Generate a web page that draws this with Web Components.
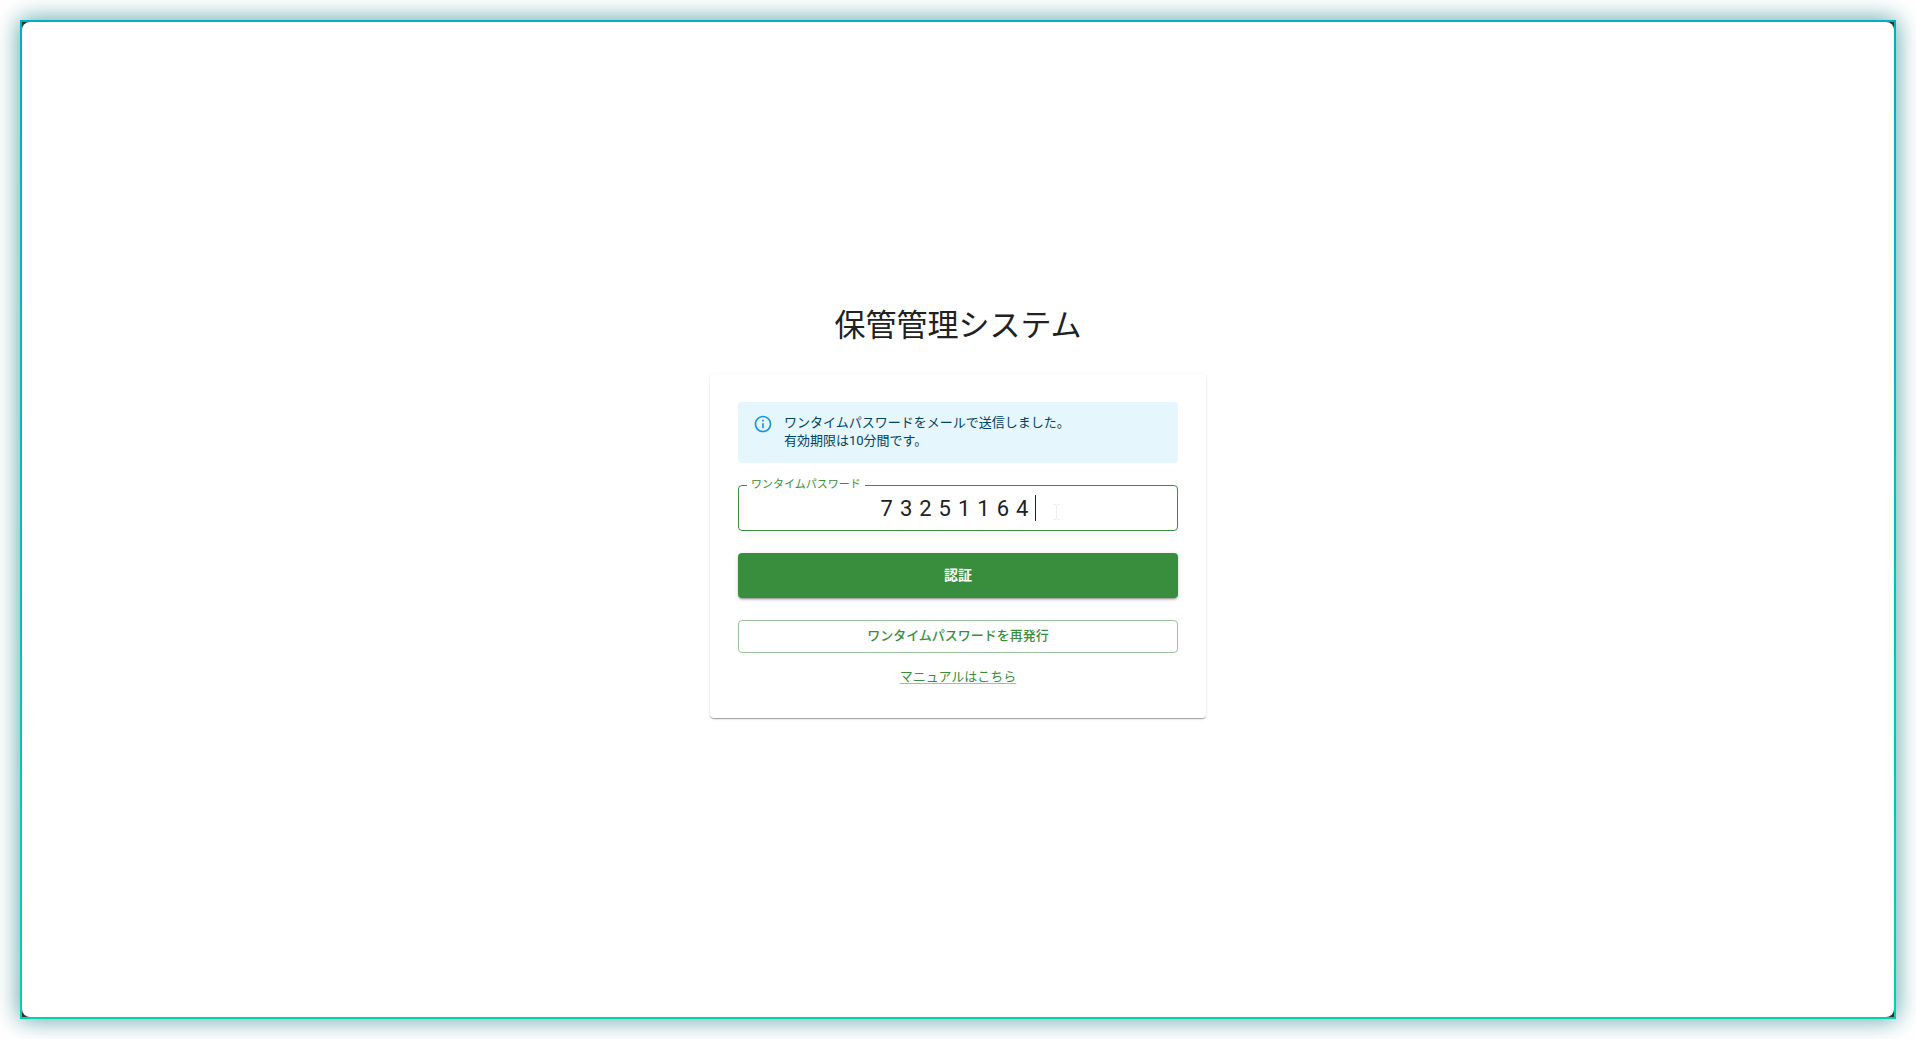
<!DOCTYPE html>
<html lang="ja">
<head>
<meta charset="utf-8">
<title>保管管理システム</title>
<style>
html, body { height: 100%; margin: 0; }
body {
  background: #fff;
  color: #212121;
  font-family: Roboto, "Noto Sans CJK JP", sans-serif;
}
</style>
</head>
<body>
<app-frame>
  <login-panel heading="保管管理システム">
    <info-alert>ワンタイムパスワードをメールで送信しました。<br>有効期限は10分間です。</info-alert>
    <otp-field label="ワンタイムパスワード" value="73251164"></otp-field>
    <action-button variant="contained">認証</action-button>
    <action-button variant="outlined">ワンタイムパスワードを再発行</action-button>
    <text-link href="#manual">マニュアルはこちら</text-link>
  </login-panel>
</app-frame>
<script>
const define = (name, render) => customElements.define(name, class extends HTMLElement {
  constructor() {
    super();
    this.attachShadow({ mode: "open" });
  }
  connectedCallback() {
    this.shadowRoot.innerHTML = "<style>*{box-sizing:border-box}</style>" + render(this);
  }
});

define("app-frame", () => `
<style>
:host { display: flex; box-sizing: border-box; min-height: 100vh; padding: 20px; overflow: hidden; }
.edge {
  flex: 1; display: flex; padding: 2px;
  background: linear-gradient(#333, #333) content-box, linear-gradient(#00afc0, #00d0ae);
  box-shadow: 0 0 22px rgba(0, 130, 140, .6), 0 0 24px rgba(40, 50, 50, .14);
}
main {
  flex: 1; display: flex; align-items: center; justify-content: center;
  background: #fff; border-radius: 8px;
}
</style>
<div class="edge"><main><slot></slot></main></div>`);

define("login-panel", el => `
<style>
:host { display: block; box-sizing: border-box; width: 496px; max-width: 100%; padding-bottom: 14px; }
h1 { margin: 0 0 29px; font-size: 31px; line-height: 38px; font-weight: 400; text-align: center; }
section {
  display: flex; flex-direction: column; gap: 22px; padding: 28px;
  background: #fff; border-radius: 4px;
  box-shadow: 0 2px 1px -1px rgba(0,0,0,.2), 0 1px 1px rgba(0,0,0,.14), 0 1px 3px rgba(0,0,0,.12);
}
</style>
<h1>${el.getAttribute("heading")}</h1>
<section><slot></slot></section>`);

define("info-alert", () => `
<style>
:host {
  display: flex; gap: 11px; padding: 12px 15px 13px; border-radius: 4px;
  background: #e5f6fd; color: #014361; font-size: 13px; line-height: 18px;
}
svg { flex: none; width: 20px; height: 20px; fill: #1c94d6; }
</style>
<svg viewBox="0 0 24 24" aria-hidden="true"><path d="M11 7h2v2h-2zm0 4h2v6h-2zm1-9C6.48 2 2 6.48 2 12s4.48 10 10 10 10-4.48 10-10S17.52 2 12 2zm0 18c-4.41 0-8-3.59-8-8s3.59-8 8-8 8 3.59 8 8-3.59 8-8 8z"/></svg>
<div role="status"><slot></slot></div>`);

define("otp-field", el => `
<style>
:host { display: block; position: relative; }
input {
  display: block; width: 100%; height: 46px; margin: 0; padding: 0;
  border: 1px solid #388e3c; border-radius: 4px; outline: none; background: #fff;
  color: #212121; font: 22px Roboto, "Noto Sans CJK JP", sans-serif;
  letter-spacing: 7px; text-align: center; caret-color: transparent;
}
label {
  position: absolute; top: -9px; left: 9px; padding: 0 4px;
  background: #fff; color: #388e3c; font-size: 11px; line-height: 18px;
}
.caret { position: absolute; top: 10px; left: calc(50% + 77px); width: 1px; height: 26px; background: #212121; }
svg { position: absolute; top: 19px; left: calc(50% + 95px); width: 7px; height: 16px; stroke: #efefef; fill: none; }
</style>
<input id="otp" inputmode="numeric" autocomplete="one-time-code" value="${el.getAttribute("value")}">
<label for="otp">${el.getAttribute("label")}</label>
<span class="caret"></span>
<svg viewBox="0 0 7 16" aria-hidden="true"><path d="M0 .5h3M4 .5h3M3.5 1v14M0 15.5h3M4 15.5h3"/></svg>`);

define("action-button", () => `
<style>
:host { display: block; }
button {
  display: block; width: 100%; height: 45px; margin: 0; padding: 0 0 2px; border: 0; border-radius: 4px;
  background: #388e3c; color: #fff; cursor: pointer;
  font: 700 14px/24px Roboto, "Noto Sans CJK JP", sans-serif;
  box-shadow: 0 3px 1px -2px rgba(0,0,0,.2), 0 2px 2px rgba(0,0,0,.14), 0 1px 5px rgba(0,0,0,.12);
}
:host([variant=outlined]) button {
  height: 33px; border: 1px solid #9bc69d; background: #fff; color: #388e3c;
  font-size: 13px; font-weight: 500; box-shadow: none;
}
</style>
<button type="button"><slot></slot></button>`);

define("text-link", el => `
<style>
:host { display: flex; justify-content: center; margin-top: -8px; padding-bottom: 3px; }
a { color: #388e3c; font-size: 13px; line-height: 20px; text-underline-offset: 2px; text-decoration: underline 1px #9bc69d; }
</style>
<a href="${el.getAttribute("href")}"><slot></slot></a>`);
</script>
</body>
</html>
